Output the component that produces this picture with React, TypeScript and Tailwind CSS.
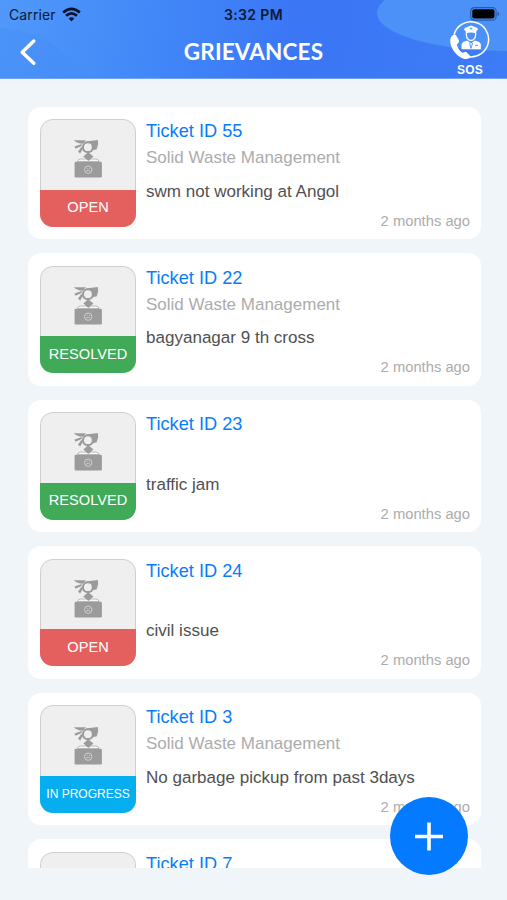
type Status = 'OPEN' | 'RESOLVED' | 'IN PROGRESS';

interface Ticket {
  id: number;
  category: string;
  text: string;
  status: Status;
}

const tickets: Ticket[] = [
  { id: 55, category: 'Solid Waste Management', text: 'swm not working at Angol', status: 'OPEN' },
  { id: 22, category: 'Solid Waste Management', text: 'bagyanagar 9 th cross', status: 'RESOLVED' },
  { id: 23, category: '', text: 'traffic jam', status: 'RESOLVED' },
  { id: 24, category: '', text: 'civil issue', status: 'OPEN' },
  { id: 3, category: 'Solid Waste Management', text: 'No garbage pickup from past 3days', status: 'IN PROGRESS' },
  { id: 7, category: '', text: '', status: 'OPEN' },
];

const statusStyle: Record<Status, string> = {
  OPEN: 'bg-[#e3605f] text-[14.6px]',
  RESOLVED: 'bg-[#40aa59] text-[14.6px]',
  'IN PROGRESS': 'bg-[#06aeef] text-[12px]',
};

function GrievanceIcon() {
  return (
    <svg width="30" height="40" viewBox="0 0 30 40" fill="none">
      <path d="M4.4 22.6 Q4.6 20.4 7.4 20 H23 Q25.9 20.4 26.1 22.6Z" fill="#f8f8f8" stroke="#b4b4b4" strokeWidth=".9" />
      <g fill="#9b9b9b">
        <path d="M.8 1.2 L13 1.2 L10 4.8 Q4 4.4 .8 1.2Z" />
        <path d="M1.6 7.4 L8.6 5 L8.6 7 L2.4 9.8Z" />
        <path d="M5 12.8 L8.2 8 L9.8 9.8 L7.2 14.6Z" />
        <path d="M13 2.6 L24.8 .9 L25.2 5 L23.6 10.6 L20 10.9 L15 8Z" />
        <circle cx="14.9" cy="8.2" r="6" />
        <path d="M15.2 13 L20.4 17.4 L15.4 22 L10.4 17.4Z" />
        <rect x="1.6" y="22.8" width="27.3" height="15.6" rx="1.2" />
      </g>
      <circle cx="14.9" cy="8.2" r="3.9" fill="#efefef" />
      <path d="M10.8 15.4 L13.9 14 M19.6 15.4 L16.6 14" stroke="#efefef" strokeWidth=".6" />
      <circle cx="15.2" cy="30.7" r="3.7" stroke="#d0d0d0" strokeWidth="1" />
      <path d="M13.2 32.3 Q15.2 29.8 17.2 32.3 M13.8 29.4 h.8 M15.9 29.4 h.8" stroke="#d0d0d0" strokeWidth=".9" />
    </svg>
  );
}

function SosIcon() {
  return (
    <svg width="42" height="40" viewBox="0 0 42 40" fill="none">
      <path d="M5.1 13.5 A17.6 17.6 0 1 1 19.5 35.8" stroke="#fff" strokeWidth="1.5" />
      <path
        d="M5.2 13.6 C2.6 14.4 1 17.2 1.2 20.6 C1.5 28 8.8 37 15.8 38 C19 38.3 21.6 36.9 21.3 35 L17.3 30.9 C16 30.2 14.6 31.4 13.8 31.8 C11 30.5 8.6 26.6 7.8 23.4 C9.2 22.3 10.4 21.2 10 19.6 L7.2 14.4 Q6.4 13.4 5.2 13.6Z"
        fill="#fff"
      />
      <path d="M15 8.6 Q15 6.7 18 6 L22 4.4 L26 6 Q29 6.7 29 8.6 L27.2 10.4 V12.4 Q22 10.6 16.8 12.4 V10.4Z" fill="#fff" />
      <path d="M22 6.3 v2.6 M20.7 7.6 h2.6" stroke="#4c91f7" strokeWidth=".8" />
      <path d="M17.4 12.3 V14.2 Q17.8 18.8 22 19.5 Q26.2 18.8 26.6 14.2 V12.3" stroke="#fff" strokeWidth="1.3" />
      <path d="M12.6 28.2 V23.2 Q13 20.7 18.2 19.4 L22 22.6 L25.8 19.4 Q31.4 20.7 31.8 23.2 V28.2Z" fill="#fff" />
      <path d="M20.6 22 L22 27.4 L23.6 22 M26 24.4 h3" stroke="#4c91f7" strokeWidth=".9" />
    </svg>
  );
}

function Header() {
  return (
    <header className="relative h-[79px] shrink-0 overflow-hidden bg-linear-[100deg,#5099fa_0%,#4187f8_32%,#3b76f5_58%,#3d7cf6_100%]">
      <svg className="absolute inset-0" width="507" height="79" viewBox="0 0 507 79" fill="none">
        <ellipse cx="506" cy="13" rx="129" ry="38" fill="#4c91f7" />
        <path d="M0 28 Q52 31 91 79 H0Z" fill="#448df8" fillOpacity=".4" />
        <path d="M0 78.5 H507" stroke="#70a2f8" />
      </svg>
      <div className="relative grid h-7 grid-cols-3 items-center px-2 font-['Inter',sans-serif] text-[#0b1933]">
        <div className="flex items-center gap-[6px] pl-px text-[14px]">
          <span className="w-[47px] tracking-[0.1px]">Carrier</span>
          <svg width="19" height="15" viewBox="0 0 19 15" fill="none" stroke="#07142c" strokeWidth="2.7">
            <path d="M1.2 5.6 Q9.5 -2 17.8 5.6" />
            <path d="M4.1 8.8 Q9.5 3.8 14.9 8.8" />
            <path d="M9.5 14.5 L6.7 11.5 Q9.5 9.2 12.3 11.5Z" fill="#07142c" stroke="none" />
          </svg>
        </div>
        <span className="text-center text-[14px] font-semibold tracking-[0.35px] whitespace-nowrap">3:32 PM</span>
        <svg className="-mr-px justify-self-end" width="30" height="14" viewBox="0 0 30 14">
          <rect x=".7" y=".7" width="25.4" height="12.4" rx="3.7" fill="none" stroke="#275cae" strokeWidth="1.2" />
          <rect x="2.3" y="2.3" width="22.2" height="9.2" rx="2" fill="#000" />
          <path d="M27.5 4.8 Q29.2 5.3 29.2 7 Q29.2 8.6 27.5 9.2Z" fill="#275cae" />
        </svg>
      </div>
      <div className="relative grid h-[51px] grid-cols-3 items-start">
        <svg className="mt-[10px] ml-[18px]" width="20" height="28" viewBox="0 0 20 28" fill="none">
          <path d="M15.8 3 L4.2 14.2 L15.8 25.3" stroke="#fff" strokeWidth="3.4" strokeLinecap="round" strokeLinejoin="round" />
        </svg>
        <h1 className="mt-[9px] text-center font-['Lato',sans-serif] text-[22.5px] leading-[30px] font-bold tracking-[0.15px] whitespace-nowrap text-white">
          GRIEVANCES
        </h1>
        <div className="mt-[-7px] mr-[16px] flex flex-col items-center justify-self-end">
          <SosIcon />
          <span className="mt-[2px] text-[12px] leading-[15px] font-bold tracking-[0.2px] text-white">SOS</span>
        </div>
      </div>
    </header>
  );
}

function TicketCard({ ticket }: { ticket: Ticket }) {
  return (
    <article className="flex h-[132.6px] shrink-0 gap-[10px] rounded-[13px] bg-white pt-[12.5px] pr-[11px] pl-3">
      <div className="flex h-[107.5px] w-24 shrink-0 flex-col overflow-hidden rounded-[13px] bg-[#efefef]">
        <div className="flex h-[70.5px] shrink-0 items-center justify-center rounded-t-[13px] border border-b-0 border-[#cfcfcf] pt-[9px]">
          <GrievanceIcon />
        </div>
        <div className={`flex flex-1 items-center justify-center whitespace-nowrap text-white ${statusStyle[ticket.status]}`}>
          {ticket.status}
        </div>
      </div>
      <div className="flex flex-1 flex-col whitespace-nowrap">
        <h2 className="h-[26px] text-[18.2px] leading-[25px] text-[#087dfb]">Ticket ID {ticket.id}</h2>
        <p className="h-[26px] text-[17px] leading-[26px] text-[#acacac]">{ticket.category}</p>
        <p className="mt-[7.5px] h-[26px] text-[17.05px] leading-[26px] text-[#505050]">{ticket.text}</p>
        <time className="mt-[6px] self-end text-[14.75px] leading-5 text-[#acacac]">2 months ago</time>
      </div>
    </article>
  );
}

export default function App() {
  return (
    <div className="relative flex h-[900px] w-[507px] flex-col overflow-hidden bg-[#f0f5f9] font-['Liberation_Sans',Arial,sans-serif]">
      <Header />
      <main className="mt-[27.5px] flex h-[761.5px] flex-col gap-[14px] overflow-hidden pr-[26px] pl-7">
        {tickets.map((ticket) => (
          <TicketCard key={ticket.id} ticket={ticket} />
        ))}
      </main>
      <button aria-label="Add grievance" className="absolute right-[39px] bottom-[25px] flex size-[78px] items-center justify-center rounded-full bg-[#037aff]">
        <svg width="30" height="30" viewBox="0 0 30 30" fill="none">
          <path d="M15 1.5 V29.5 M1 15.5 H29" stroke="#fff" strokeWidth="3.6" />
        </svg>
      </button>
    </div>
  );
}
